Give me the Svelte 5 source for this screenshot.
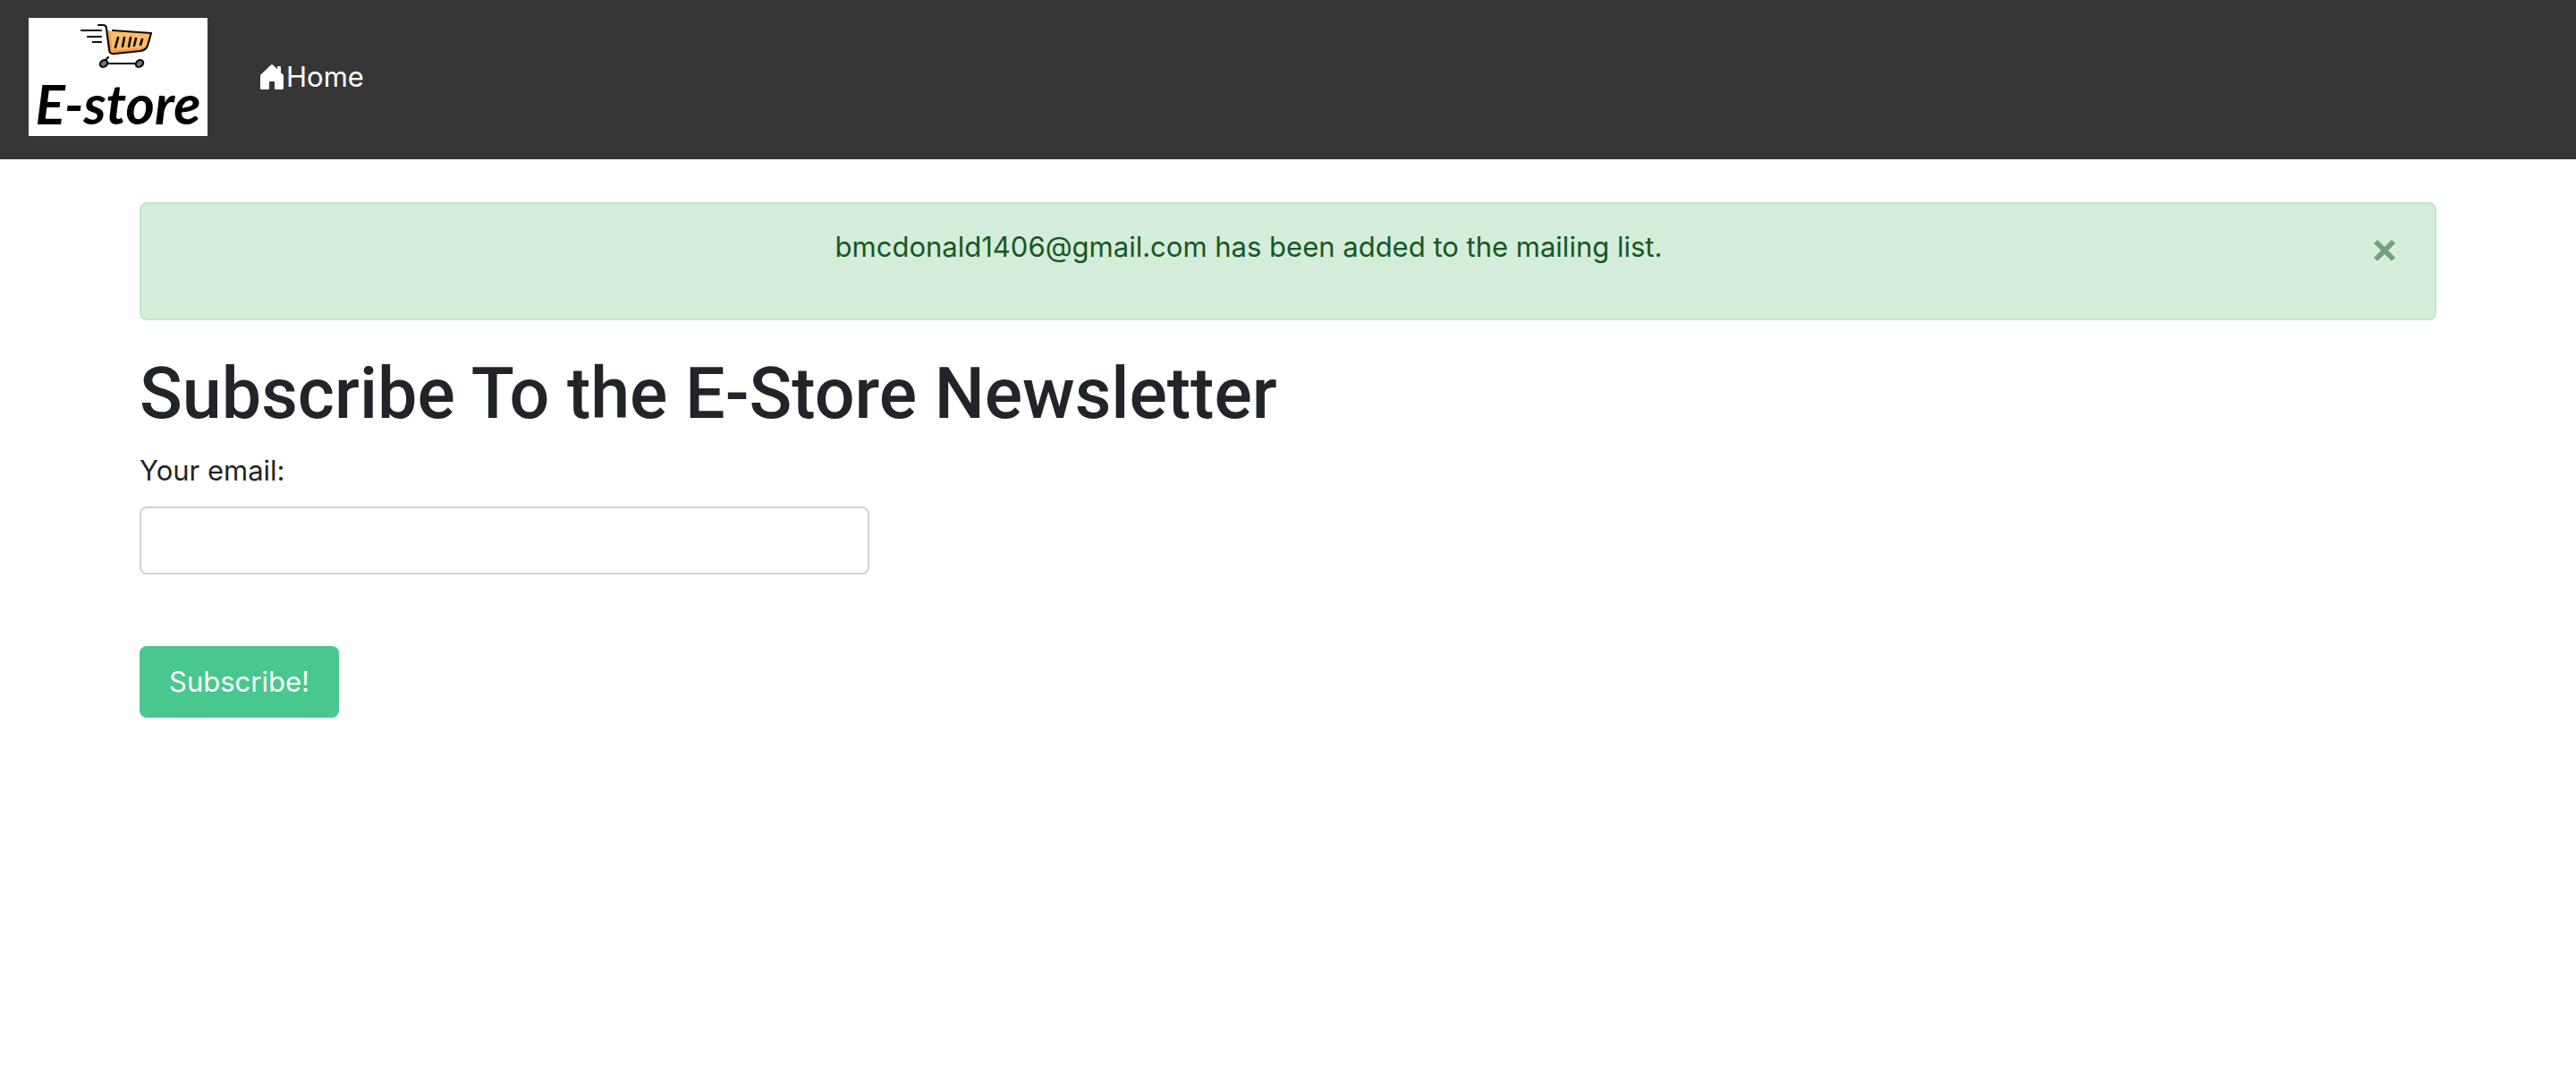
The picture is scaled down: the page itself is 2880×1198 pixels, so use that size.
<script>
  let recipient = $state('bmcdonald1406@gmail.com');
  let showAlert = $state(true);
  let email = $state('');

  function subscribe(event) {
    event.preventDefault();
    if (!email) return;
    recipient = email;
    email = '';
    showAlert = true;
  }
</script>

<nav class="navbar" aria-label="Main">
  <a class="brand" href="/">
    <svg viewBox="0 0 200 132" role="img" aria-label="E-store">
      <path d="M89 15 L120 16 L137 17 L131 35 Q129 38 123 38 L95 41 Q91 40 90 34 Z" fill="#ffbd63" />
      <path d="M89 14 L91 35 Q92 39 96 40 L126 36 L130 33 L94 36 Q92 28 91 14 Z" fill="#f9964f" />
      <g fill="none" stroke="#0b0b0b" stroke-width="2.2" stroke-linecap="round" stroke-linejoin="round">
        <path d="M78 8 H83 Q87 8 87 12 L90 35 Q90 41 96 40 L125 37 Q131 36 133 31 L137 17 L94 14" />
        <path d="M59 14 H81 M66 21 H81 M72 27 H81" />
        <path d="M100 22 L97 33 M107 22 L105 32 M114 22 L112 32 M120 23 L118 31 M127 24 L125 30" stroke-width="2.6" />
        <path d="M88 51 H120 M85 48 L89 44" />
        <ellipse cx="84" cy="51" rx="4.4" ry="3.6" fill="#77757c" transform="rotate(-35 84 51)" />
        <ellipse cx="124" cy="51" rx="4.4" ry="3.6" fill="#77757c" transform="rotate(-35 124 51)" />
      </g>
      <text class="wordmark" x="100" y="119" text-anchor="middle">E-store</text>
    </svg>
  </a>
  <a class="nav-link" href="/">
    <svg class="home-icon" viewBox="0 0 26 28" aria-hidden="true">
      <path d="M12 .5 Q13 -.4 14 .5 L19 5.300 V3 Q19 2 20 2 H22 Q23 2 23 3 V9.200 L25.300 11.300 Q26 12 26 13 V26.500 Q26 28 24.500 28 H17.500 Q16 28 16 26.500 V20 Q16 19 15 19 H11 Q10 19 10 20 V26.500 Q10 28 8.500 28 H1.500 Q0 28 0 26.500 V13 Q0 12 .7 11.300 Z" fill="currentColor" />
    </svg>
    <span>Home</span>
  </a>
</nav>

<main class="container">
  {#if showAlert}
    <div class="alert" role="alert">
      <p>{recipient} has been added to the mailing list.</p>
      <button class="close" type="button" aria-label="Close" onclick={() => (showAlert = false)}>
        <svg viewBox="0 0 26 26" aria-hidden="true">
          <path d="M3 3 L23 23 M23 3 L3 23" fill="none" stroke="currentColor" stroke-width="6" />
        </svg>
      </button>
    </div>
  {/if}

  <h1>Subscribe To the E-Store Newsletter</h1>
  <form onsubmit={subscribe}>
    <label for="email">Your email:</label>
    <input id="email" type="email" bind:value={email} />
    <button class="submit" type="submit">Subscribe!</button>
  </form>
</main>

<style>
  :global(body) {
    margin: 0;
    background: #fff;
    color: #212529;
    font: 400 31px/48px Inter, "Liberation Sans", sans-serif;
  }

  .navbar {
    display: flex;
    align-items: center;
    gap: 58px;
    padding: 20px 32px 26px;
    background: #363636;
  }

  .brand {
    display: block;
    width: 200px;
    background: #fff;
  }

  .brand svg {
    display: block;
    width: 100%;
  }

  .wordmark {
    font: italic 700 62px Lato, sans-serif;
    fill: #000;
  }

  .nav-link {
    display: flex;
    align-items: center;
    gap: 2px;
    color: #fff;
    text-decoration: none;
  }

  .home-icon {
    width: 28px;
    height: 28px;
  }

  .container {
    padding: 48px 156px;
  }

  .alert {
    position: relative;
    box-sizing: border-box;
    margin-bottom: 32px;
    padding: 24px 128px 24px 40px;
    border: 2px solid #c3e6cb;
    border-radius: 8px;
    background: #d4edda;
    color: #155724;
    text-align: center;
  }

  .alert p {
    margin: 0 0 32px;
  }

  .close {
    position: absolute;
    top: 0;
    right: 0;
    display: flex;
    padding: 39px 43px;
    border: 0;
    background: none;
    color: inherit;
    opacity: 0.5;
    cursor: pointer;
  }

  .close svg {
    width: 26px;
    height: 26px;
    filter: drop-shadow(0 2px 0 #fff);
  }

  h1 {
    margin: 0 0 12px;
    font-family: Roboto, "Liberation Sans", sans-serif;
    font-size: 79px;
    font-weight: 500;
    line-height: 100px;
  }

  form {
    display: flex;
    flex-direction: column;
    align-items: flex-start;
  }

  label {
    margin-bottom: 16px;
  }

  input {
    box-sizing: border-box;
    width: 100%;
    max-width: 816px;
    height: 76px;
    margin-bottom: 80px;
    padding: 12px 24px;
    border: 2px solid #ced4da;
    border-radius: 8px;
    background: #fff;
    color: #495057;
    font: inherit;
  }

  .submit {
    height: 80px;
    padding: 0 33px;
    border: 0;
    border-radius: 8px;
    background: #48c78e;
    color: #fff;
    font: inherit;
    cursor: pointer;
  }
</style>
